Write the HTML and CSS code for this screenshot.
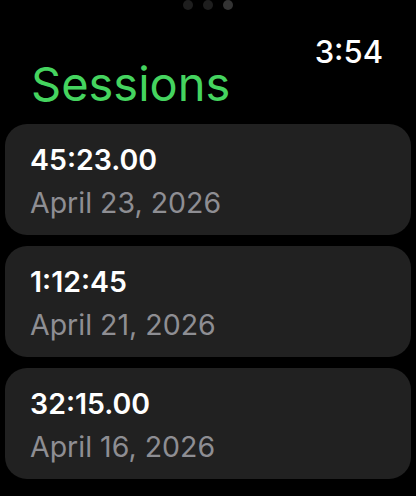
FILE: index.html
```html
<!DOCTYPE html>
<html lang="en">
<head>
    <meta charset="UTF-8">
    <meta name="viewport" content="width=device-width, initial-scale=1.0">
    <title>Sessions</title>
    <link rel="stylesheet" href="styles.css">
</head>
<body>
    <div class="screen">
        <div class="page-dots">
            <span class="dot"></span>
            <span class="dot"></span>
            <span class="dot active"></span>
        </div>
        <div class="status-bar">
            <span class="clock">3:54</span>
        </div>
        <h1 class="title">Sessions</h1>
        <div class="session-list">
            <div class="session-card">
                <p class="duration">45:23.00</p>
                <p class="date">April 23, 2026</p>
            </div>
            <div class="session-card">
                <p class="duration">1:12:45</p>
                <p class="date">April 21, 2026</p>
            </div>
            <div class="session-card">
                <p class="duration">32:15.00</p>
                <p class="date">April 16, 2026</p>
            </div>
        </div>
    </div>
</body>
</html>
```

FILE: styles.css
```css
body {
    margin: 0;
    padding: 0;
    background-color: #000;
    font-family: Inter, "Noto Sans", sans-serif;
    color: #fff;
}
.screen {
    position: relative;
    width: 416px;
    height: 496px;
    overflow: hidden;
}
.page-dots {
    position: absolute;
    top: 0;
    left: 183px;
    display: flex;
    gap: 10px;
}
.page-dots .dot {
    width: 10px;
    height: 10px;
    border-radius: 50%;
    background-color: #1e1e1e;
}
.page-dots .dot.active {
    background-color: #333;
}
.status-bar {
    display: flex;
    justify-content: flex-end;
    padding: 40px 33px 0 0;
    height: 24px;
}
.clock {
    font-size: 31px;
    line-height: 24px;
    font-weight: 500;
}
.title {
    margin: -2px 0 0 0;
    padding-left: 31px;
    font-size: 47px;
    line-height: 44px;
    font-weight: 400;
    color: #45d45f;
}
.session-list {
    display: flex;
    flex-direction: column;
    gap: 11px;
    padding: 18px 5px 0 5px;
}
.session-card {
    background-color: #212121;
    border-radius: 22px;
    height: 111px;
    padding: 14px 25px 0 25px;
    box-sizing: border-box;
}
.session-card p {
    margin: 0;
}
.duration {
    font-size: 28.5px;
    font-weight: 600;
    line-height: 43px;
}
.date {
    font-size: 28.5px;
    color: #8e8e93;
    line-height: 43px;
}
```
